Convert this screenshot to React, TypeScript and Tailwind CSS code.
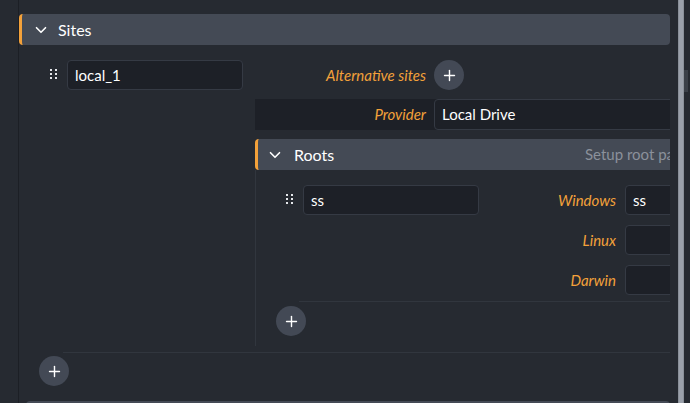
import { ChevronDown, Plus } from "lucide-react";

function Grip() {
  return (
    <svg width="8" height="12" viewBox="0 0 8 12" className="shrink-0">
      {[1, 5, 9].map((y) =>
        [1, 6].map((x) => (
          <rect key={`${x}-${y}`} x={x - 1} y={y - 1} width="2" height="2" fill="#e5e7eb" />
        ))
      )}
    </svg>
  );
}

function AddButton() {
  return (
    <button className="flex h-[30px] w-[30px] shrink-0 items-center justify-center rounded-full bg-[#434955] text-white">
      <Plus size={17} strokeWidth={2} />
    </button>
  );
}

function Field({ value, width }: { value?: string; width: string }) {
  return (
    <div
      className={`flex h-[30px] shrink-0 items-center rounded-[4px] border border-[#353a44] bg-[#1d2027] px-[7px] text-[15px] text-white ${width}`}
    >
      {value}
    </div>
  );
}

const label = "text-right italic text-[15px] text-[#f3a13a]";

export default function App() {
  return (
    <div className="flex h-[403px] w-[690px] overflow-hidden bg-[#262a31] font-['Lato',sans-serif] text-white">
      <div className="ml-[18px] w-[652px] shrink-0 border-l border-[#1c1f25] pt-[14px]">
        <div className="flex h-[31px] items-center gap-[8px] rounded-[4px] border-l-[3px] border-[#f3a13a] bg-[#444a55] pl-[10px] text-[16px]">
          <ChevronDown size={18} strokeWidth={2.2} />
          <span>Sites</span>
        </div>

        <div className="flex">
          <div className="w-[236px] shrink-0 pt-[15px]">
            <div className="flex items-center gap-[9px] pl-[31px]">
              <Grip />
              <Field value="local_1" width="w-[176px]" />
            </div>
          </div>

          <div className="min-w-0 flex-1 overflow-hidden pt-[15px]">
            <div className="flex items-center gap-[8px]">
              <span className={`w-[171px] shrink-0 ${label}`}>Alternative sites</span>
              <AddButton />
            </div>

            <div className="mt-[9px] flex h-[31px] items-center gap-[8px] bg-[#1d2027]">
              <span className={`w-[171px] shrink-0 ${label}`}>Provider</span>
              <div className="flex h-[31px] w-[300px] shrink-0 items-center rounded-l-[4px] border border-[#353a44] bg-[#1d2027] px-[7px] text-[15px]">
                Local Drive
              </div>
            </div>

            <div className="mt-[9px] flex h-[31px] w-[600px] items-center gap-[10px] rounded-[4px] border-l-[3px] border-[#f3a13a] bg-[#444a55] pl-[8px] text-[16px]">
              <ChevronDown size={18} strokeWidth={2.2} />
              <span className="w-[281px] shrink-0">Roots</span>
              <span className="text-[15px] text-[#8b919b]">Setup root paths</span>
            </div>

            <div className="w-[600px] border-l border-[#31363e] pb-[10px] pt-[15px]">
              <div className="flex">
                <div className="flex h-[30px] items-center gap-[9px] pl-[30px]">
                  <Grip />
                  <Field value="ss" width="w-[176px]" />
                </div>
                <div className="flex flex-col gap-[10px]">
                  {[
                    ["Windows", "ss"],
                    ["Linux", ""],
                    ["Darwin", ""],
                  ].map(([name, v]) => (
                    <div key={name} className="flex items-center gap-[9px]">
                      <span className={`w-[137px] shrink-0 ${label}`}>{name}</span>
                      <Field value={v} width="w-[150px]" />
                    </div>
                  ))}
                </div>
              </div>
              <div className="ml-[43px] mt-[6px] border-t border-[#31363e]" />
              <div className="ml-[20px] mt-[4px]">
                <AddButton />
              </div>
            </div>
          </div>
        </div>

        <div className="ml-[44px] mt-[6px] border-t border-[#31363e]" />
        <div className="ml-[20px] mt-[3px]">
          <AddButton />
        </div>
        <div className="ml-[7px] mt-[15px] h-[20px] rounded-[4px] bg-[#444a55]" />
      </div>

      <div className="ml-[8px] w-[6px] shrink-0 border-x border-[#8a9099] bg-[#9ba1ab]" />
      <div className="w-[6px] shrink-0 pt-[70px]">
        <div className="h-[22px] w-[4px] bg-[#3b4048]" />
      </div>
    </div>
  );
}
